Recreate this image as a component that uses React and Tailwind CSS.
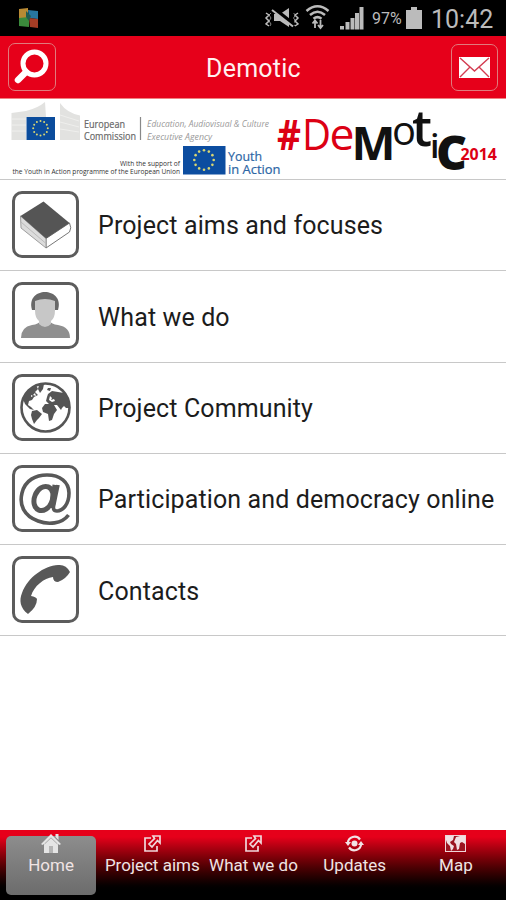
const TEXT = '"Open Sans", "Noto Sans", sans-serif'

const Stars = ({ cx, cy, r, size }) => (
    <g fill="#d9d672">
        {Array.from({ length: 12 }, (_, i) => {
            const a = (i * Math.PI) / 6
            return <circle key={i} cx={cx + r * Math.sin(a)} cy={cy - r * Math.cos(a)} r={size} />
        })}
    </g>
)

// Text stretched to a fixed width, the way the logos are set
const Fit = ({ w, children, ...props }) => (
    <text textLength={w} lengthAdjust="spacingAndGlyphs" {...props}>
        {children}
    </text>
)

const CommissionLogo = () => (
    <svg width="275" height="80" viewBox="0 99 275 80" className="shrink-0 overflow-visible" fontFamily={TEXT}>
        <path d="M11.5 113 L26 111 Q38 108 45 102 L46 117 H26 V140 H11.5z" fill="#e2e2e0" />
        <path d="M60 103 Q67 113 80 115.500 V140 H60z" fill="#e2e2e0" />
        <path d="M12 119 H26 M12 125 H26 M12 131 H26 M60 115 L79 121 M60 122 L79 127 M60 129 L79 132" stroke="#efefed" strokeWidth="1" />
        <rect x="26.500" y="117" width="28.500" height="23" fill="#0b4c9c" />
        <Stars cx={40.5} cy={128.3} r={7.3} size={1} />
        <g fill="#686868" stroke="#686868" strokeWidth="0.2" fontSize="10">
            <Fit x="84" y="128.300" w={41}>European</Fit>
            <Fit x="84" y="139.800" w={52}>Commission</Fit>
        </g>
        <path d="M140.500 117 V140" stroke="#888" strokeWidth="1.200" />
        <g fill="#999" fontSize="8.500" fontStyle="italic">
            <Fit x="147" y="127" w={122}>Education, Audiovisual &amp; Culture</Fit>
            <Fit x="147" y="140" w={65}>Executive Agency</Fit>
        </g>
        <g fill="#333" fontSize="6.800">
            <Fit x="120" y="166.300" w={60}>With the support of</Fit>
            <Fit x="12.500" y="174" w={167.5}>the Youth in Action programme of the European Union</Fit>
        </g>
        <rect x="183" y="146" width="42.500" height="28.500" fill="#0c4da0" />
        <Stars cx={204} cy={160} r={9.7} size={1.3} />
        <g fill="#2d66a5" stroke="#2d66a5" strokeWidth="0.200" fontSize="12.500">
            <Fit x="228" y="161" w={34}>Youth</Fit>
            <Fit x="228" y="174" w={52.5}>in Action</Fit>
        </g>
    </svg>
)

const DemoticLogo = () => (
    <svg width="231" height="80" viewBox="275 99 231 80" className="shrink-0 overflow-visible" fontFamily={TEXT}>
        <g fill="#dc0014">
            <Fit x="277" y="150" w={24} fontSize="42" fontWeight="700">#</Fit>
            <Fit x="302" y="150" w={29} fontSize="43">D</Fit>
            <Fit x="329.500" y="150" w={25} fontSize="43">e</Fit>
            <Fit x="460.500" y="160" w={36.5} fontSize="16.500" fontWeight="700">2014</Fit>
        </g>
        <g fill="#111">
            <Fit x="351.500" y="159.500" w={44} fontSize="46" fontWeight="700">M</Fit>
            <Fit x="392" y="145" w={24} fontSize="41" fontWeight="500">o</Fit>
            <Fit x="412" y="145.500" w={20} fontSize="50" fontWeight="600">t</Fit>
            <Fit x="430" y="158" w={9.5} fontSize="33" fontWeight="600">i</Fit>
            <Fit x="436" y="169.500" w={31} fontSize="48" fontWeight="800">C</Fit>
        </g>
    </svg>
)

const StatusIcons = () => (
    <svg width="102" height="28" viewBox="265 4 102 28" fill="none" stroke="#bbb">
        {/* muted, vibrating */}
        <path d="M267 13l3 2-3 3 3 3-3 3 3 2 M299 13l-3 2 3 3-3 3 3 3-3 2" strokeWidth="1.500" />
        <path d="M272 13l-2 2 2 3-2 3 2 3-1 2 M294.500 13l2 2-2 3 2 3-2 3 1 2" strokeWidth="1" opacity="0.700" />
        <path d="M275 14h6l9-6v19l-9-6h-6z" fill="#bbb" stroke="none" />
        <path d="M275 9 L295 25" stroke="#000" strokeWidth="4.500" />
        <path d="M273 10 L294 26.500" strokeWidth="2" />
        {/* wifi */}
        <path d="M307.500 11 Q318.500 1.500 329.500 11 M311 15 Q318.500 8.500 326 15 M314.500 18.800 Q318.500 15.500 322.500 18.800" strokeWidth="2.500" />
        <path d="M316 28V21 M313.500 23.500l2.500-3 2.500 3 M321.500 20v8 M319 25l2.500 3 2.500-3" strokeWidth="1.800" />
        {/* signal */}
        <path d="M343 29.500V26 M348.500 29.500V22 M353.500 29.500V18 M358 29.500V13 M362.500 29.500V7" strokeWidth="4" />
    </svg>
)

const Book = () => (
    <svg width="67" height="67" viewBox="0 0 67 67">
        <path d="M34 47.500 L57.500 32 Q60 37 57.500 41 L34 57z" fill="#fff" stroke="#777" strokeWidth="1" />
        <path d="M8.500 25 L34 47.500 V57 L9 37z" fill="#dcdcdc" stroke="#8a8a8a" strokeWidth="0.800" />
        <path d="M9 31 L34 52.500" stroke="#bbb" />
        <path d="M31.500 10.500 L57.500 32 L34 47.500 L8.500 25z" fill="#555" />
    </svg>
)

const Person = () => (
    <svg width="67" height="67" viewBox="0 0 67 67">
        <path d="M20 28 C13 4 53 4 46 28z" fill="#686868" />
        <path d="M9 56 Q9 45 20 43 Q27 42 28 39 H38 Q39 42 46 43 Q58 45 58 56z" fill="#8f8f8f" />
        <path d="M23 19 Q33 15 43 19 V28 Q43 36 39 39 V42 Q33 48 27 42 V39 Q23 36 23 28z" fill="#c7c7c7" />
    </svg>
)

const Globe = () => (
    <svg width="67" height="67" viewBox="0 0 67 67" fill="#555">
        <circle cx="33.500" cy="33.500" r="24" fill="none" stroke="#555" strokeWidth="2.600" />
        <path d="M11 25 L16 17 L24 11 L26 15 L23 18 L26 21 L22 23 L20 26 L17 27 L16 31 L19 33 L22 36 L18 35 L13 30z" />
        <path d="M27 11 L32 10 L31 15 L28 19 L26 15z M36 14l3 0-1 3-3-1z" />
        <path d="M20 37 L25 36 L30 40 L27 44 L25 46 L22 50 L20 45 L19 41z" />
        <path d="M35 23 L36 20 L40 17 L46 18 L52 19 L56 25 L58 34 L54 34 L52 32 L50 34 L49 36 L45 31 L42 31 L45 36 L42 40 L40 46 L37 47 L36 40 L31 38 L30 34 L33 30 L37 30 L34 27z" />
        <path d="M38 22l2 2-1 2 3-1 1 2-3 1-3-2z M23 19l1 3-3-1z M19 21l2 1-2 1z" fill="#fff" />
    </svg>
)

const At = () => (
    <svg width="67" height="67" viewBox="0 0 67 67" fill="none" stroke="#585858">
        <path d="M56.500 50 C50 59 36 60 26 56 C12 51 7 40 10 28 C13 15 24 10 35 10 C48 10 57 17 57 28 C57 39 51 46 45 46 C41 46 41 43 42 39 L46 20" strokeWidth="3.600" />
        <ellipse cx="31.500" cy="33.500" rx="9" ry="12.500" transform="rotate(22 31.500 33.500)" strokeWidth="5" />
        <path d="M43.500 20 L39.500 43" strokeWidth="6" />
    </svg>
)

const Phone = () => (
    <svg width="67" height="67" viewBox="0 0 67 67">
        <path
            d="M16 58 C8 52 7 44 10 37 C16 21 32 10 46 9 Q54 8 58 16 Q54 23 46 26 Q41 26 41 21 C32 22 22 30 19 40 Q24 41 25 43 Q25 51 16 58z"
            fill="#585858"
        />
    </svg>
)

const items = [
    { label: 'Project aims and focuses', Icon: Book },
    { label: 'What we do', Icon: Person },
    { label: 'Project Community', Icon: Globe },
    { label: 'Participation and democracy online', Icon: At },
    { label: 'Contacts', Icon: Phone },
]

const HomeIcon = () => (
    <svg width="20" height="19" viewBox="0 0 20 19" fill="#e5e5e5">
        <path d="M10 0 L20 10 L18.500 11 L17 10 V19 H12 V12 H8 V19 H3 V10 L1.500 11 L0 10z M14.500 0h3v6l-3-3z" />
        <path d="M8 12h4v7H8z" fill="#b5b5b5" />
        <path d="M3.500 10 L10 3.800 L16.500 10" fill="none" stroke="#999" strokeWidth="0.800" />
    </svg>
)

const ShareIcon = () => (
    <svg width="17" height="17" viewBox="0 0 17 17" fill="none" stroke="#f0d8dc" strokeWidth="1.700">
        <path d="M7 3H1v13h12v-5" />
        <path d="M9 1h7v7l-2.500-2.500L8 12 5 9l5.500-5.500z" />
    </svg>
)

const RefreshIcon = () => (
    <svg width="19" height="17" viewBox="0 0 19 17" fill="none" stroke="#f2e2e5" strokeWidth="2.200">
        <path d="M2.800 8 A6.800 6.800 0 0 1 15 4.500 M16.200 9 A6.800 6.800 0 0 1 4 12.500" />
        <path d="M0 7h6l-3 4z M13 10h6l-3-4z" fill="#f2e2e5" stroke="none" />
        <circle cx="9.500" cy="8.500" r="3" fill="#f2e2e5" stroke="none" />
    </svg>
)

const MapIcon = () => (
    <svg width="21" height="17" viewBox="0 0 21 17">
        <rect x="0.500" y="0.500" width="20" height="16" fill="#9b1521" stroke="#efd5d8" />
        <path d="M1 1h8l-1 4-3 2 1 2 3 2-1 3-2 2-1-5-3-3-1-3z M11 2l4-1h5v8l-3-2-2 1-1 6-2 1-1-6-2-2z" fill="#f1e1e3" />
    </svg>
)

const tabs = [
    { label: 'Home', Icon: HomeIcon, active: true },
    { label: 'Project aims', Icon: ShareIcon },
    { label: 'What we do', Icon: ShareIcon },
    { label: 'Updates', Icon: RefreshIcon },
    { label: 'Map', Icon: MapIcon },
]

export default function App() {
    return (
        <div className="flex h-[900px] w-[506px] flex-col overflow-hidden bg-white font-[Roboto,sans-serif]">
            {/* STATUS BAR */}
            <div className="flex h-9 shrink-0 items-center bg-black text-[#bbb]">
                <svg width="22" height="22" viewBox="0 0 22 22" className="ml-[18px]">
                    <path d="M1 2 L10 1 V11 L1 12z" fill="#b98a34" />
                    <path d="M10 3 L20 4 V12 L11 11z" fill="#2876a0" />
                    <path d="M1 11 L11 10 V20 L1 19z" fill="#3b8a3c" />
                    <path d="M11 11 L20 12 V21 L12 20z" fill="#a63d25" />
                    <path d="M8 4 L13 9 L11 14 L8 10z" fill="#235c50" />
                </svg>
                <div className="ml-auto flex items-center">
                    <StatusIcons />
                    <span className="ml-[6px] w-[32px] pt-[2px] text-[16px]">97%</span>
                    <svg width="16" height="24" viewBox="0 0 16 24" className="ml-[2px]" fill="#bbb">
                        <path d="M5 1h6v3h5v19H0V4h5z" />
                    </svg>
                    <span className="ml-[9px] w-[75px] pt-[3px] text-[25px] leading-9">10:42</span>
                </div>
            </div>

            {/* HEADER */}
            <header className="flex h-[63px] shrink-0 items-center justify-between border-b border-[#f08080] bg-[#e6001a] px-[8px]">
                <button type="button" className="flex size-[48px] items-center justify-center rounded-[7px] border-[1.5px] border-[#e17a7c]">
                    <svg width="36" height="36" viewBox="0 0 36 36" fill="none" stroke="#fff">
                        <circle cx="20.500" cy="14.500" r="11.500" strokeWidth="5" />
                        <path d="M12 23 L4 31" strokeWidth="6.500" strokeLinecap="round" />
                    </svg>
                </button>
                <h1 className="pt-[4px] text-[25px] tracking-[0.25px] text-[#fff0f0]">Demotic</h1>
                <button type="button" className="flex size-[47px] items-center justify-center rounded-[7px] border-[1.5px] border-[#e17a7c]">
                    <svg width="31" height="21" viewBox="0 0 31 21">
                        <rect width="31" height="21" fill="#fff" />
                        <path d="M1 1 L15.500 14 L30 1 M1 20 L11 10 M30 20 L20 10" fill="none" stroke="#d33b50" strokeWidth="1.400" />
                    </svg>
                </button>
            </header>

            {/* BANNER */}
            <div className="flex h-[81px] shrink-0 border-b border-[#c8c8c8]">
                <CommissionLogo />
                <DemoticLogo />
            </div>

            {/* MENU */}
            <ul className="shrink-0">
                {items.map(({ label, Icon }) => (
                    <li key={label} className="flex h-[91.3px] items-center border-b border-[#c8c8c8] pb-px pl-[12px]">
                        <div className="flex size-[67px] items-center justify-center rounded-[10px] border-3 border-[#5c5c5c]">
                            <span className="flex size-[67px] shrink-0 items-center justify-center">
                                <Icon />
                            </span>
                        </div>
                        <span className="ml-[19px] pt-[3px] text-[25px] tracking-[0.12px] whitespace-nowrap text-[#1c1c1c]">{label}</span>
                    </li>
                ))}
            </ul>

            {/* TAB BAR */}
            <nav className="mt-auto grid h-[70px] shrink-0 grid-cols-5 bg-linear-to-b from-[#e6001a] from-10% to-black to-90%">
                {tabs.map(({ label, Icon, active }) => (
                    <div key={label} className="pt-[6px] pr-[5px] pb-[5px] pl-[6px]">
                        <div
                            className={
                                active
                                    ? 'flex h-full justify-center rounded-[5px] bg-linear-to-b from-[#8d8d8d] to-[#6c6c6c]'
                                    : 'flex h-full justify-center'
                            }
                        >
                            <div className="-mt-[3px] flex flex-col items-center">
                                <span className="flex h-[20px] items-center">
                                    <Icon />
                                </span>
                                <span className="text-[17px] leading-[24px] whitespace-nowrap text-[#f0e4e4]">{label}</span>
                            </div>
                        </div>
                    </div>
                ))}
            </nav>
        </div>
    )
}
